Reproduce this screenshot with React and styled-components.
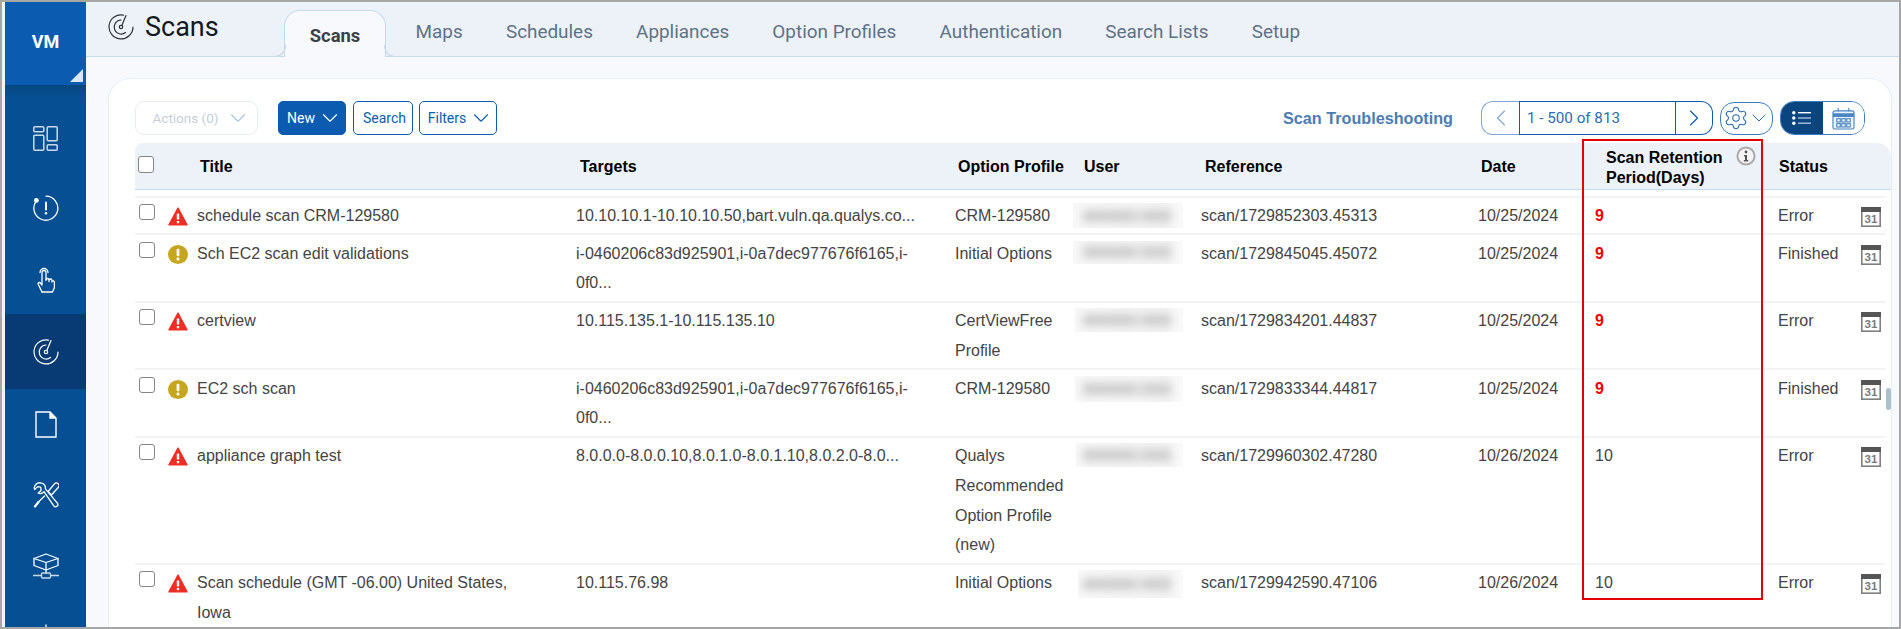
import React from 'react';
import styled, { createGlobalStyle } from 'styled-components';
import { ChevronDown, ChevronLeft, ChevronRight, Settings } from 'lucide-react';

const GlobalStyle = createGlobalStyle`
  html, body { margin: 0; padding: 0; background: #fff; }
  * { box-sizing: border-box; }
  body { font-family: "Liberation Sans", Arial, sans-serif; }
`;

const COLUMNS = '33px 29px 379px 379px 118px 128px 277px 117px 183px 83px 1fr';

const Frame = styled.div`
  position: relative;
  display: flex;
  width: 1901px;
  height: 629px;
  overflow: hidden;
  border: 2px solid #a6a6a6;
  padding-left: 3px;
  background: #f4f4f4;
`;

const Sidebar = styled.nav`
  flex: 0 0 81px;
  display: flex;
  flex-direction: column;
  background: #074f93;
`;

const ModuleBox = styled.div`
  position: relative;
  flex: 0 0 83px;
  display: flex;
  align-items: center;
  justify-content: center;
  padding-bottom: 4px;
  background: #0b5cb0;
  color: #fff;
  font: 700 18px Roboto, sans-serif;
  &::after {
    content: '';
    position: absolute;
    right: 3px;
    bottom: 3px;
    border-style: solid;
    border-width: 0 0 13px 13px;
    border-color: transparent transparent #dbe7f4 transparent;
  }
`;

const SideList = styled.div`
  padding-top: 18px;
  background: linear-gradient(#06477f 0, #074f93 12px);
`;

const SideItem = styled.div`
  display: flex;
  align-items: center;
  justify-content: center;
  height: ${(p) => p.$h}px;
  background: ${(p) => (p.$active ? '#083b73' : 'transparent')};
  color: #fff;
`;

const Main = styled.div`
  flex: 1;
  display: flex;
  flex-direction: column;
  min-width: 0;
  background: #f7f9fd;
`;

const TopBar = styled.header`
  flex: 0 0 55px;
  display: flex;
  background: #edf2f9;
  border-bottom: 1px solid #c6daed;
`;

const PageTitle = styled.div`
  flex: 0 0 198px;
  display: flex;
  align-items: flex-start;
  gap: 11px;
  padding: 10px 0 0 22px;
  color: #2f3338;
  svg { margin-top: 2px; }
  h1 {
    margin: 0;
    font: 400 27px/30px Roboto, sans-serif;
    color: #14181d;
  }
`;

const Tabs = styled.div`
  display: flex;
  align-items: flex-end;
`;

const Tab = styled.div`
  position: relative;
  padding: 0 21.6px;
  height: 47px;
  font: 400 18.9px/46px Roboto, sans-serif;
  color: #5d7285;
  white-space: nowrap;
  &:nth-child(2) { margin-left: 8px; }
`;

const ActiveTab = styled.div`
  position: relative;
  width: 102px;
  height: 47px;
  margin-bottom: -1px;
  text-align: center;
  font: 700 18.4px/50px Roboto, sans-serif;
  color: #3a4047;
  background: #f7f9fd;
  border: 1px solid #c6daed;
  border-bottom: 0;
  border-radius: 16px 16px 0 0;
  &::before, &::after {
    content: '';
    position: absolute;
    bottom: 0;
    width: 11px;
    height: 11px;
    border-bottom: 1px solid #c6daed;
  }
  &::before {
    left: -11px;
    border-right: 1px solid #c6daed;
    border-bottom-right-radius: 11px;
  }
  &::after {
    right: -11px;
    border-left: 1px solid #c6daed;
    border-bottom-left-radius: 11px;
  }
`;

const Body = styled.div`
  flex: 1;
  padding: 21px 7px 0 22px;
  min-height: 0;
`;

const Card = styled.section`
  height: 100%;
  padding: 22px 0 0 26px;
  background: #fff;
  border: 1px solid #e7eef5;
  border-bottom: 0;
  border-radius: 22px 22px 0 0;
`;

const Toolbar = styled.div`
  display: flex;
  align-items: center;
  height: 34px;
  padding-right: 26px;
  font-family: Roboto, sans-serif;
`;

const Button = styled.button`
  display: flex;
  align-items: center;
  justify-content: center;
  gap: 5px;
  height: 34px;
  width: ${(p) => p.$w}px;
  margin-right: ${(p) => p.$mr || 0}px;
  padding: 0 0 0 3px;
  font: 400 14px Roboto, sans-serif;
  color: ${(p) => (p.$primary ? '#fff' : '#0b5cb0')};
  background: ${(p) => (p.$primary ? '#0b5cb0' : '#fff')};
  border: 1px solid #0b5cb0;
  border-radius: 5px;
  svg { margin: 0 -3px; flex: none; }
`;

const DisabledButton = styled(Button)`
  gap: 10px;
  padding-left: 8px;
  font-size: 13.5px;
  color: #c6ced7;
  border-color: #e8ecf2;
  border-radius: 9px;
  svg { color: #a9c4e0; }
`;

const Troubleshoot = styled.a`
  margin: 0 28px 0 auto;
  font: 700 16.2px "Liberation Sans", Arial, sans-serif;
  color: #4b7db4;
`;

const Pager = styled.div`
  display: flex;
  width: 232px;
  height: 34px;
  margin-right: 7px;
`;

const PagerArrow = styled.div`
  flex: 0 0 ${(p) => (p.$prev ? 38 : 37)}px;
  display: flex;
  align-items: center;
  justify-content: center;
  color: ${(p) => (p.$prev ? '#7fa7d3' : '#0b5cb0')};
  border: 1px solid ${(p) => (p.$prev ? '#7fa7d3' : '#0b5cb0')};
  border-width: ${(p) => (p.$prev ? '1px 0 1px 1px' : '1px 1px 1px 0')};
  border-radius: ${(p) => (p.$prev ? '12px 0 0 12px' : '0 12px 12px 0')};
`;

const PagerRange = styled.div`
  flex: 1;
  display: flex;
  align-items: center;
  padding-left: 7px;
  font-size: 15.2px;
  color: #2a6cb1;
  border: 1px solid #0b5cb0;
`;

const GearButton = styled.div`
  display: flex;
  align-items: center;
  justify-content: center;
  gap: 0;
  width: 53px;
  height: 33px;
  margin-right: 7px;
  color: #2a6cb1;
  border: 1px solid #3b7dc0;
  border-radius: 14px;
  svg { flex: none; margin: 0 -1px; }
`;

const ViewToggle = styled.div`
  display: flex;
  width: 85px;
  height: 34px;
  overflow: hidden;
  border: 1px solid #3b7dc0;
  border-radius: 14px;
`;

const ViewOption = styled.div`
  flex: 1;
  display: flex;
  align-items: center;
  justify-content: center;
  background: ${(p) => (p.$on ? '#0a4580' : '#fff')};
`;

const TableHead = styled.div`
  display: grid;
  grid-template-columns: ${COLUMNS};
  align-items: center;
  height: 47px;
  margin-top: 8px;
  padding-top: 2px;
  background: #edf2f9;
  border-bottom: 1px solid #c6daed;
  border-radius: 8px 14px 0 0;
  font-size: 16px;
  font-weight: 700;
  color: #000;
`;

const HeadCell = styled.div`
  grid-column: ${(p) => p.$col};
  padding-left: ${(p) => p.$pad}px;
  line-height: 20px;
  white-space: nowrap;
`;

const RetentionHead = styled(HeadCell)`
  position: relative;
  padding-top: 1px;
  svg {
    position: absolute;
    top: -1px;
    left: 141px;
  }
`;

const CheckBox = styled.span`
  display: block;
  width: 16px;
  height: ${(p) => (p.$head ? 17 : 16)}px;
  margin-left: ${(p) => (p.$head ? 3 : 4)}px;
  margin-top: ${(p) => (p.$head ? -5 : 3)}px;
  background: #fff;
  border: 1.5px solid #858585;
  border-radius: 3px;
`;

const Rows = styled.div`
  margin: 6px 6px 0 0;
`;

const Row = styled.div`
  display: grid;
  grid-template-columns: ${COLUMNS};
  padding: 3.4px 0 3px;
  border-top: 2px solid #f3f3f3;
  font-size: 16px;
  line-height: 29.6px;
  color: #444;
  &:first-child { padding: 3.2px 0 2.5px; }
`;

const IconCell = styled.div`
  padding-top: 6px;
  line-height: 0;
`;

const TitleCell = styled.div`
  padding-right: 40px;
`;

const TargetCell = styled.div`
  padding-right: 28px;
`;

const ProfileCell = styled.div`
  padding-right: 4px;
`;

const UserBlur = styled.div`
  display: flex;
  align-items: center;
  height: ${(p) => p.$h}px;
  width: ${(p) => 110 - p.$inset}px;
  margin: 2px 0 0 ${(p) => p.$inset}px;
  overflow: hidden;
  background: linear-gradient(90deg, #f8f8f8, #f4f4f4 85%, #fafafa);
  &::before {
    content: '';
    display: block;
    width: 88px;
    height: 12px;
    margin-left: ${(p) => 10 - p.$inset}px;
    background: linear-gradient(90deg, #cdcdcd 0 56%, #dedede 60% 66%, #cfcfcf 70%);
    filter: blur(4px);
  }
`;

const Retention = styled.div`
  color: ${(p) => (p.$low ? '#f00000' : 'inherit')};
  font-weight: ${(p) => (p.$low ? 700 : 400)};
`;

const ScrollThumb = styled.div`
  position: absolute;
  left: 1884px;
  top: 386px;
  width: 5px;
  height: 22px;
  border-radius: 3px;
  background: #aebfcd;
`;

const Highlight = styled.div`
  position: absolute;
  left: 1580px;
  top: 137px;
  width: 181px;
  height: 461px;
  border: 2px solid #e60000;
  pointer-events: none;
`;

const Line = ({ children, w = 26, h = 26, sw = 1.3 }) => (
  <svg width={w} height={h} viewBox={`0 0 ${w} ${h}`} fill="none" stroke="currentColor" strokeWidth={sw} strokeLinecap="round" strokeLinejoin="round">
    {children}
  </svg>
);

const RadarIcon = () => (
  <Line sw={1.2}>
    <path d="M15.5 1.2A12 12 0 1 0 25 13" />
    <path d="M13 6A7 7 0 1 0 17.5 18.5" />
    <circle cx="13" cy="13" r="1.7" />
    <path d="M13.8 11.5L18 1.5" />
  </Line>
);

const BoardIcon = () => (
  <svg width="25" height="25" viewBox="0 0 25 25" fill="none" stroke="#ccd9e8" strokeWidth="1.5">
    <rect x="0.8" y="0.8" width="10" height="5" rx="1" />
    <rect x="0.8" y="9.2" width="10" height="15" rx="1" />
    <rect x="14.2" y="0.8" width="10" height="14" rx="1" />
    <rect x="14.2" y="18.8" width="10" height="5.4" rx="1" />
  </svg>
);

const AlertCycleIcon = () => (
  <Line>
    <path d="M13 1.2A12 12 0 1 1 3.4 5.8" />
    <circle cx="3.4" cy="5.4" r="2.4" fill="currentColor" stroke="none" />
    <path d="M13 7.5V14.5" strokeWidth="2" />
    <circle cx="13" cy="18.3" r="1.2" fill="currentColor" stroke="none" />
  </Line>
);

const HandIcon = () => (
  <svg width="18" height="28" viewBox="0 0 18 28" fill="none" stroke="currentColor" strokeWidth="1.3" strokeLinecap="round" strokeLinejoin="round">
    <path d="M3 7.5a4 4 0 1 1 8 0" />
    <path d="M5 27L1.3 19.5c-.8-1.8 1.2-2.8 2.4-1.2L5 20V7.5a2 2 0 0 1 4 0V15" />
    <path d="M9 15a1.5 1.5 0 0 1 3 0v1.5M12 15.5a1.5 1.5 0 0 1 3 0V17M15 16.5a1.3 1.3 0 0 1 2.4.5v5.5L15.5 27H5" />
  </svg>
);

const FileIcon = () => (
  <svg width="22" height="27" viewBox="0 0 22 27" fill="none" stroke="currentColor" strokeWidth="1.4">
    <path d="M1 1H15L21 7V26H1Z" />
    <path d="M15 1V7H21" fill="#fff" />
  </svg>
);

const ToolsIcon = () => (
  <Line>
    <path d="M8.5 1.2A5.2 5.2 0 0 0 1.6 7.6L4.6 4.6 7.6 5.2 8.2 8.2 5.2 11.2A5.2 5.2 0 0 0 11 9.6L20.8 23.8a2.2 2.2 0 0 0 3.6-2.6L12.4 6.8A5.2 5.2 0 0 0 8.5 1.2Z" />
    <path d="M21.5 1.8a2.6 2.6 0 0 1 3.7 3.7L18.5 13 15 9.5Z" />
    <path d="M11.5 14L5 20.5" />
    <path d="M5.5 20L2 24.5" strokeWidth="2.2" />
  </Line>
);

const NetworkIcon = () => (
  <Line h={27}>
    <path d="M13 1L25 5.5V12.5L13 17 1 12.5V5.5Z" />
    <path d="M1 5.5L13 9.5 25 5.5M13 9.5V20" />
    <rect x="8.5" y="20" width="9" height="5" rx="1" stroke="#ccd9e8" />
    <path d="M0.5 22.5H8.5M17.5 22.5H25.5" stroke="#ccd9e8" />
  </Line>
);

const TipIcon = () => (
  <Line>
    <path d="M13 1V14" />
  </Line>
);

const ErrorIcon = () => (
  <svg width="20" height="19" viewBox="0 0 20 19">
    <path d="M10 1.2L19 17.8H1Z" fill="#ee2d24" stroke="#ee2d24" strokeWidth="1.4" strokeLinejoin="round" />
    <rect x="8.8" y="6.6" width="2.4" height="6" rx="0.6" fill="#fff" />
    <rect x="8.8" y="14" width="2.4" height="2.3" rx="0.6" fill="#fff" />
  </svg>
);

const FinishedIcon = () => (
  <svg width="20" height="19" viewBox="0 0 20 19">
    <ellipse cx="10" cy="9.5" rx="10" ry="9.5" fill="#c6a61e" />
    <rect x="8.6" y="3.8" width="2.8" height="7.4" rx="1.2" fill="#fff" />
    <rect x="8.6" y="12.6" width="2.8" height="2.8" rx="1.2" fill="#fff" />
  </svg>
);

const InfoIcon = () => (
  <svg width="20" height="20" viewBox="0 0 20 20">
    <circle cx="10" cy="10" r="8.6" fill="#f4f4f4" stroke="#aaa" strokeWidth="2" />
    <circle cx="10" cy="6" r="1.4" fill="#555" />
    <path d="M8 9h3v5h1.2v1.4H7.8V14H9v-3.6H8Z" fill="#555" />
  </svg>
);

const CalendarBadge = () => (
  <svg width="20" height="20" viewBox="0 0 20 20">
    <rect x="0.8" y="0.8" width="18.4" height="18.4" fill="#fff" stroke="#7f7f7f" strokeWidth="1.6" />
    <rect x="0" y="0" width="20" height="5" fill="#555" />
    <text x="10" y="16.4" textAnchor="middle" fontSize="11.5" fontWeight="700" fontFamily="Liberation Sans, sans-serif" fill="#7a7a7a">31</text>
  </svg>
);

const ListIcon = () => (
  <svg width="19" height="14" viewBox="0 0 19 14">
    <circle cx="1.8" cy="1.8" r="1.7" fill="#fff" />
    <circle cx="1.8" cy="7" r="1.7" fill="#fff" />
    <circle cx="1.8" cy="12.2" r="1.7" fill="#fff" />
    <rect x="6" y="1" width="13" height="1.4" fill="#fff" />
    <rect x="6" y="6.3" width="13" height="1.4" fill="#a9bfd8" />
    <rect x="6" y="11.5" width="13" height="1.4" fill="#a9bfd8" />
  </svg>
);

const PlannerIcon = () => (
  <svg width="23" height="23" viewBox="0 0 24 24" fill="none" stroke="#4a86c5" strokeWidth="1.2">
    <rect x="1" y="4" width="22" height="19" rx="2" fill="#eaf2fa" />
    <path d="M1 8.5H23" strokeWidth="4" />
    <path d="M6.5 1V4.5M17.5 1V4.5" />
    {[5, 10.2, 15.4].map((x) =>
      [12.2, 17.4].map((y) => <rect key={`${x}-${y}`} x={x} y={y} width="3.6" height="3.4" fill="#fff" />)
    )}
  </svg>
);

const rows = [
  { s: 'error', title: 'schedule scan CRM-129580', target: '10.10.10.1-10.10.10.50,bart.vuln.qa.qualys.co...', profile: 'CRM-129580', blur: [25, 0], ref: 'scan/1729852303.45313', date: '10/25/2024', days: 9, status: 'Error' },
  { s: 'warn', title: 'Sch EC2 scan edit validations', target: 'i-0460206c83d925901,i-0a7dec977676f6165,i-0f0...', profile: 'Initial Options', blur: [23, 0], ref: 'scan/1729845045.45072', date: '10/25/2024', days: 9, status: 'Finished' },
  { s: 'error', title: 'certview', target: '10.115.135.1-10.115.135.10', profile: 'CertViewFree Profile', blur: [24, 2], ref: 'scan/1729834201.44837', date: '10/25/2024', days: 9, status: 'Error' },
  { s: 'warn', title: 'EC2 sch scan', target: 'i-0460206c83d925901,i-0a7dec977676f6165,i-0f0...', profile: 'CRM-129580', blur: [26, 2], ref: 'scan/1729833344.44817', date: '10/25/2024', days: 9, status: 'Finished' },
  { s: 'error', title: 'appliance graph test', target: '8.0.0.0-8.0.0.10,8.0.1.0-8.0.1.10,8.0.2.0-8.0...', profile: 'Qualys Recommended Option Profile (new)', blur: [24, 3], ref: 'scan/1729960302.47280', date: '10/26/2024', days: 10, status: 'Error' },
  { s: 'error', title: 'Scan schedule (GMT -06.00) United States, Iowa', target: '10.115.76.98', profile: 'Initial Options', blur: [28, 5], ref: 'scan/1729942590.47106', date: '10/26/2024', days: 10, status: 'Error' },
];

const sideItems = [
  { Icon: BoardIcon, h: 70 },
  { Icon: AlertCycleIcon, h: 70 },
  { Icon: HandIcon, h: 71 },
  { Icon: RadarIcon, h: 75, active: true },
  { Icon: FileIcon, h: 71 },
  { Icon: ToolsIcon, h: 70 },
  { Icon: NetworkIcon, h: 72 },
  { Icon: TipIcon, h: 70 },
];
const tabs = ['Maps', 'Schedules', 'Appliances', 'Option Profiles', 'Authentication', 'Search Lists', 'Setup'];

export default function App() {
  return (
    <>
      <GlobalStyle />
      <Frame>
        <Sidebar>
          <ModuleBox>VM</ModuleBox>
          <SideList>
            {sideItems.map(({ Icon, h, active }, i) => (
              <SideItem key={i} $h={h} $active={active}>
                <Icon />
              </SideItem>
            ))}
          </SideList>
        </Sidebar>

        <Main>
          <TopBar>
            <PageTitle>
              <RadarIcon />
              <h1>Scans</h1>
            </PageTitle>
            <Tabs>
              <ActiveTab>Scans</ActiveTab>
              {tabs.map((t) => (
                <Tab key={t}>{t}</Tab>
              ))}
            </Tabs>
          </TopBar>

          <Body>
            <Card>
              <Toolbar>
                <DisabledButton $w={123} $mr={20}>
                  Actions (0) <ChevronDown size={26} strokeWidth={1} />
                </DisabledButton>
                <Button $w={68} $mr={7} $primary>
                  New <ChevronDown size={26} strokeWidth={1} />
                </Button>
                <Button $w={60} $mr={6}>Search</Button>
                <Button $w={78}>
                  Filters <ChevronDown size={26} strokeWidth={1} />
                </Button>
                <Troubleshoot>Scan Troubleshooting</Troubleshoot>
                <Pager>
                  <PagerArrow $prev>
                    <ChevronLeft size={28} strokeWidth={1} />
                  </PagerArrow>
                  <PagerRange>1 - 500 of 813</PagerRange>
                  <PagerArrow>
                    <ChevronRight size={28} strokeWidth={1} />
                  </PagerArrow>
                </Pager>
                <GearButton>
                  <Settings size={26} strokeWidth={1} />
                  <ChevronDown size={24} strokeWidth={1} />
                </GearButton>
                <ViewToggle>
                  <ViewOption $on><ListIcon /></ViewOption>
                  <ViewOption><PlannerIcon /></ViewOption>
                </ViewToggle>
              </Toolbar>

              <TableHead>
                <HeadCell $col={1} $pad={0}><CheckBox $head /></HeadCell>
                <HeadCell $col={3} $pad={3}>Title</HeadCell>
                <HeadCell $col={4} $pad={4}>Targets</HeadCell>
                <HeadCell $col={5} $pad={3}>Option Profile</HeadCell>
                <HeadCell $col={6} $pad={11}>User</HeadCell>
                <HeadCell $col={7} $pad={4}>Reference</HeadCell>
                <HeadCell $col={8} $pad={3}>Date</HeadCell>
                <RetentionHead $col={9} $pad={11}>
                  Scan Retention<br />Period(Days)
                  <InfoIcon />
                </RetentionHead>
                <HeadCell $col={10} $pad={1}>Status</HeadCell>
              </TableHead>

              <Rows>
                {rows.map((r) => (
                  <Row key={r.ref}>
                    <div><CheckBox /></div>
                    <IconCell>{r.s === 'error' ? <ErrorIcon /> : <FinishedIcon />}</IconCell>
                    <TitleCell>{r.title}</TitleCell>
                    <TargetCell>{r.target}</TargetCell>
                    <ProfileCell>{r.profile}</ProfileCell>
                    <div><UserBlur $h={r.blur[0]} $inset={r.blur[1]} /></div>
                    <div>{r.ref}</div>
                    <div>{r.date}</div>
                    <Retention $low={r.days < 10}>{r.days}</Retention>
                    <div>{r.status}</div>
                    <IconCell><CalendarBadge /></IconCell>
                  </Row>
                ))}
              </Rows>
            </Card>
          </Body>
        </Main>

        <ScrollThumb />
        <Highlight />
      </Frame>
    </>
  );
}
